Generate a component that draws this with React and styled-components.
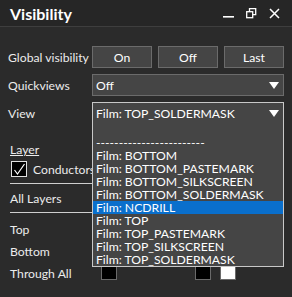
import React from "react";
import styled, { createGlobalStyle } from "styled-components";

const Global = createGlobalStyle`
  html, body { margin: 0; padding: 0; background: #2b2b2b; }
`

const Window = styled.div`
  width: 292px;
  height: 297px;
  background: #2b2b2b;
  color: #ececec;
  font-family: Lato, "Noto Sans", sans-serif;
  font-size: 12.2px;
  overflow: hidden;
  white-space: nowrap;
`

const TitleBar = styled.div`
  height: 26px;
  display: flex;
  align-items: center;
  padding: 0 10px;
  background: #262626;
  border-bottom: 1px solid #3e3e3e;
`

const Title = styled.div`
  flex: 1;
  font-size: 16px;
  font-weight: bold;
  color: #fff;
`

const Icons = styled.div`
  display: flex;
  gap: 12px;
  align-items: center;
  margin-right: 2px;
`

const Body = styled.div`
  padding: 19px 8px 0 8px;
`

const Row = styled.div`
  display: grid;
  grid-template-columns: 84px 192px;
  align-items: center;
  height: 22px;
  margin-bottom: 6px;
`

const Buttons = styled.div`
  display: flex;
  gap: 6px;
`

const Button = styled.div`
  width: 60px;
  height: 22px;
  box-sizing: border-box;
  background: #454545;
  border: 1px solid #6b6b6b;
  display: flex;
  align-items: center;
  justify-content: center;
  color: #fff;
`

const Select = styled.div`
  position: relative;
  height: 22px;
  box-sizing: border-box;
  background: #454545;
  border: 1px solid ${p => (p.open ? "#c8c8c8" : "#6b6b6b")};
  display: flex;
  align-items: center;
  justify-content: space-between;
  padding: 0 4px 0 3px;
  color: #fff;
`

const Arrow = styled.div`
  width: 0;
  height: 0;
  border-left: 5px solid transparent;
  border-right: 5px solid transparent;
  border-top: 7px solid #fff;
`

const Popup = styled.div`
  position: absolute;
  top: 100%;
  left: -1px;
  width: 192px;
  box-sizing: border-box;
  background: #454545;
  border: 1px solid #c8c8c8;
  border-top: none;
  z-index: 2;
`

const Item = styled.div`
  height: 13px;
  line-height: 13px;
  padding-left: 3px;
  color: #fff;
  background: ${p => (p.active ? "#0a6fcc" : "transparent")};
`

const Section = styled.div`
  padding-left: 2px;
`

const Heading = styled.div`
  margin-top: 18px;
  line-height: 16px;
  text-decoration: underline;
`

const CheckRow = styled.div`
  display: flex;
  align-items: center;
  gap: 6px;
  margin-top: 3px;
  height: 16px;
`

const Box = styled.div`
  width: 16px;
  height: 16px;
  box-sizing: border-box;
  background: #000;
  border: 1px solid #e0e0e0;
  margin-left: 1px;
  display: flex;
  align-items: center;
  justify-content: center;
`

const Rule = styled.div`
  width: 82px;
  height: 1px;
  background: #cfcfcf;
  margin-top: ${p => p.top}px;
`

const Label = styled.div`
  margin-top: 7px;
  line-height: 16px;
`

const LayerRow = styled.div`
  display: grid;
  grid-template-columns: 91px 94px 25px 25px;
  align-items: center;
  height: 22px;
  margin-top: ${p => p.top || 0}px;
`

const Swatch = styled.div`
  width: 16px;
  height: 14px;
  box-sizing: border-box;
  background: ${p => p.color};
  border: 1px solid #6a6a6a;
`

const films = [
  "",
  "------------------------",
  "Film: BOTTOM",
  "Film: BOTTOM_PASTEMARK",
  "Film: BOTTOM_SILKSCREEN",
  "Film: BOTTOM_SOLDERMASK",
  "Film: NCDRILL",
  "Film: TOP",
  "Film: TOP_PASTEMARK",
  "Film: TOP_SILKSCREEN",
  "Film: TOP_SOLDERMASK",
];

const App = () => {
  return (
    <Window>
      <Global />
      <TitleBar>
        <Title>Visibility</Title>
        <Icons>
          <svg width="11" height="11" viewBox="0 0 11 11">
            <rect x="0" y="8" width="11" height="1.6" fill="#fff" />
          </svg>
          <svg width="11" height="11" viewBox="0 0 11 11" fill="none" stroke="#fff" strokeWidth="1.3">
            <rect x="0.7" y="3.7" width="6" height="6" />
            <path d="M3.5 3.7V0.7H9.7V6.7H6.7" />
          </svg>
          <svg width="11" height="11" viewBox="0 0 11 11" stroke="#fff" strokeWidth="1.5">
            <path d="M1 1L10 10M10 1L1 10" />
          </svg>
        </Icons>
      </TitleBar>
      <Body>
        <Row>
          <span>Global visibility</span>
          <Buttons>
            <Button>On</Button>
            <Button>Off</Button>
            <Button>Last</Button>
          </Buttons>
        </Row>
        <Row>
          <span>Quickviews</span>
          <Select>
            <span>Off</span>
            <Arrow />
          </Select>
        </Row>
        <Row>
          <span>View</span>
          <Select open>
            <span>Film: TOP_SOLDERMASK</span>
            <Arrow />
            <Popup>
              {films.map((f, i) => (
                <Item key={i} active={f === "Film: NCDRILL"}>{f}</Item>
              ))}
            </Popup>
          </Select>
        </Row>
        <Section>
          <Heading>Layer</Heading>
          <CheckRow>
            <Box>
              <svg width="13" height="13" viewBox="0 0 13 13" fill="none" stroke="#fff" strokeWidth="1.2">
                <path d="M1.5 7L4.5 11L11.5 1" />
              </svg>
            </Box>
            <span>Conductors</span>
          </CheckRow>
          <Rule top={6} />
          <Label>All Layers</Label>
          <Rule top={5} />
          <LayerRow top={5}>
            <span>Top</span>
            <Swatch color="#000" />
            <Swatch color="#000" />
            <Swatch color="#fff" />
          </LayerRow>
          <LayerRow>
            <span>Bottom</span>
            <Swatch color="#000" />
            <Swatch color="#000" />
            <Swatch color="#fff" />
          </LayerRow>
          <LayerRow>
            <span>Through All</span>
            <Swatch color="#000" />
            <Swatch color="#000" />
            <Swatch color="#fff" />
          </LayerRow>
        </Section>
      </Body>
    </Window>
  );
};

export default App;
